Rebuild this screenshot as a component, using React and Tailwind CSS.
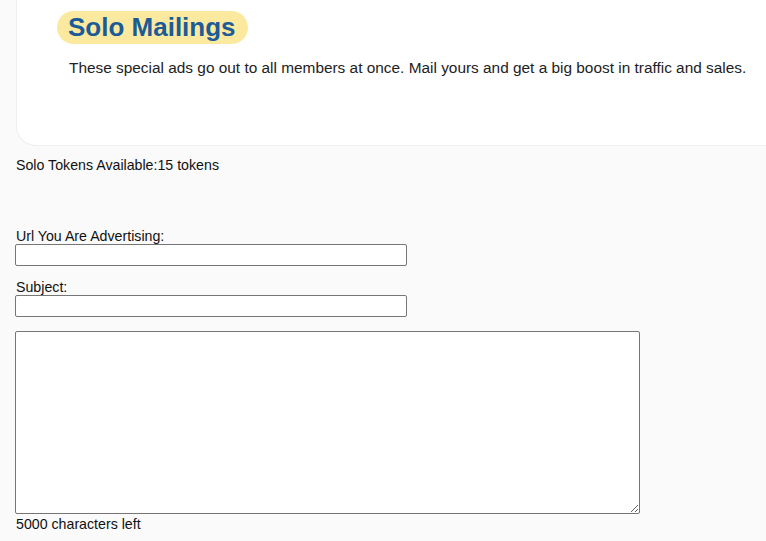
import React, { useState } from 'react'

const App = () => {
    const [msg, setMsg] = useState('')

    return (
        <div className='min-h-screen w-full bg-[#fafafa] text-[#111]' style={{ fontFamily: '"Liberation Sans", Arial, sans-serif' }}>
            <div className='ml-[16px] h-[146px] bg-white rounded-bl-[20px] border-b border-l border-[#efefef] pt-[11px] pl-[40px]'>
                <h1 className='inline-block bg-[#fce9a0] rounded-full pl-[11px] pr-[12px] h-[33px] leading-[33px] text-[26px] font-bold text-[#1b5c97]'>
                    Solo Mailings
                </h1>
                <p className='mt-[15px] ml-[12px] text-[15.4px] leading-[18px] text-[#222]'>
                    These special ads go out to all members at once. Mail yours and get a big boost in traffic and sales.
                </p>
            </div>

            <div className='px-[15px] text-[14.2px] leading-[16px]'>
                <div className='mt-[11px] ml-[1px]'>Solo Tokens Available:15 tokens</div>

                <div className='mt-[55px]'>
                    <label className='block ml-[1px] leading-[16px]'>Url You Are Advertising:</label>
                    <input type='text' className='block w-[392px] h-[22px] bg-white border border-[#767676] rounded-[2px] outline-0' />
                </div>

                <div className='mt-[13px]'>
                    <label className='block ml-[1px] leading-[16px]'>Subject:</label>
                    <input type='text' className='block w-[392px] h-[22px] bg-white border border-[#767676] rounded-[2px] outline-0' />
                </div>

                <textarea
                    value={msg}
                    onChange={(e) => setMsg(e.target.value)}
                    className='block mt-[14px] w-[625px] h-[183px] bg-white border border-[#767676] rounded-[2px] outline-0'
                />
                <div className='mt-[2px] ml-[1px]'>{5000 - msg.length} characters left</div>
            </div>
        </div>
    )
}

export default App
